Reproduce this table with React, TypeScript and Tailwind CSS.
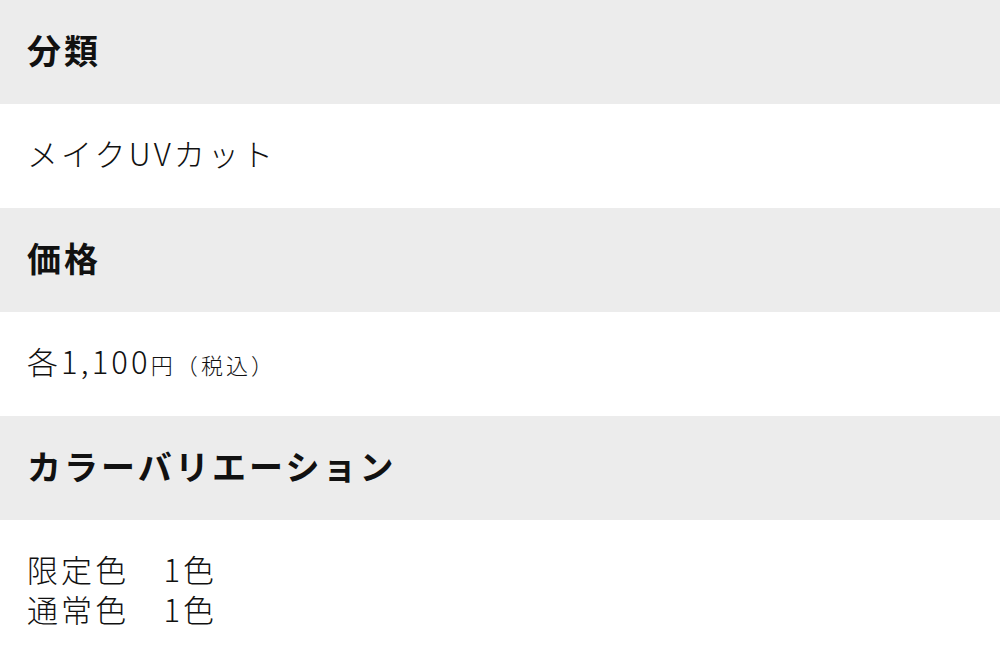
import React from 'react';

const rows = [
  { title: '分類', body: ['メイクUVカット'] },
  { title: '価格', body: [] as string[], price: true },
  { title: 'カラーバリエーション', body: ['限定色　1色', '通常色　1色'] },
];

const App = () => {
  return (
    <div className="w-full min-h-screen bg-white text-black" style={{ fontFamily: '"Noto Sans CJK JP", "Noto Sans", sans-serif' }}>
      {rows.map((row) => (
        <div key={row.title}>
          <div className="bg-[#ececec] px-[27px] pt-[30px] pb-[34px] h-[104px]">
            <h2 className="text-[34px] leading-[40px] font-bold tracking-[0.09em] text-[#111]">{row.title}</h2>
          </div>
          <div className="px-[27px] pt-[29px] pb-[35px] font-light text-[31px] leading-[40px] tracking-[0.1em] text-[#111]">
            {row.price ? (
              <p className="h-[40px]">
                各1,100<span className="text-[22px] leading-none">円</span>
                <span className="text-[22px] leading-none">（税込）</span>
              </p>
            ) : (
              row.body.map((line) => <p key={line}>{line}</p>)
            )}
          </div>
        </div>
      ))}
    </div>
  );
};

export default App;
